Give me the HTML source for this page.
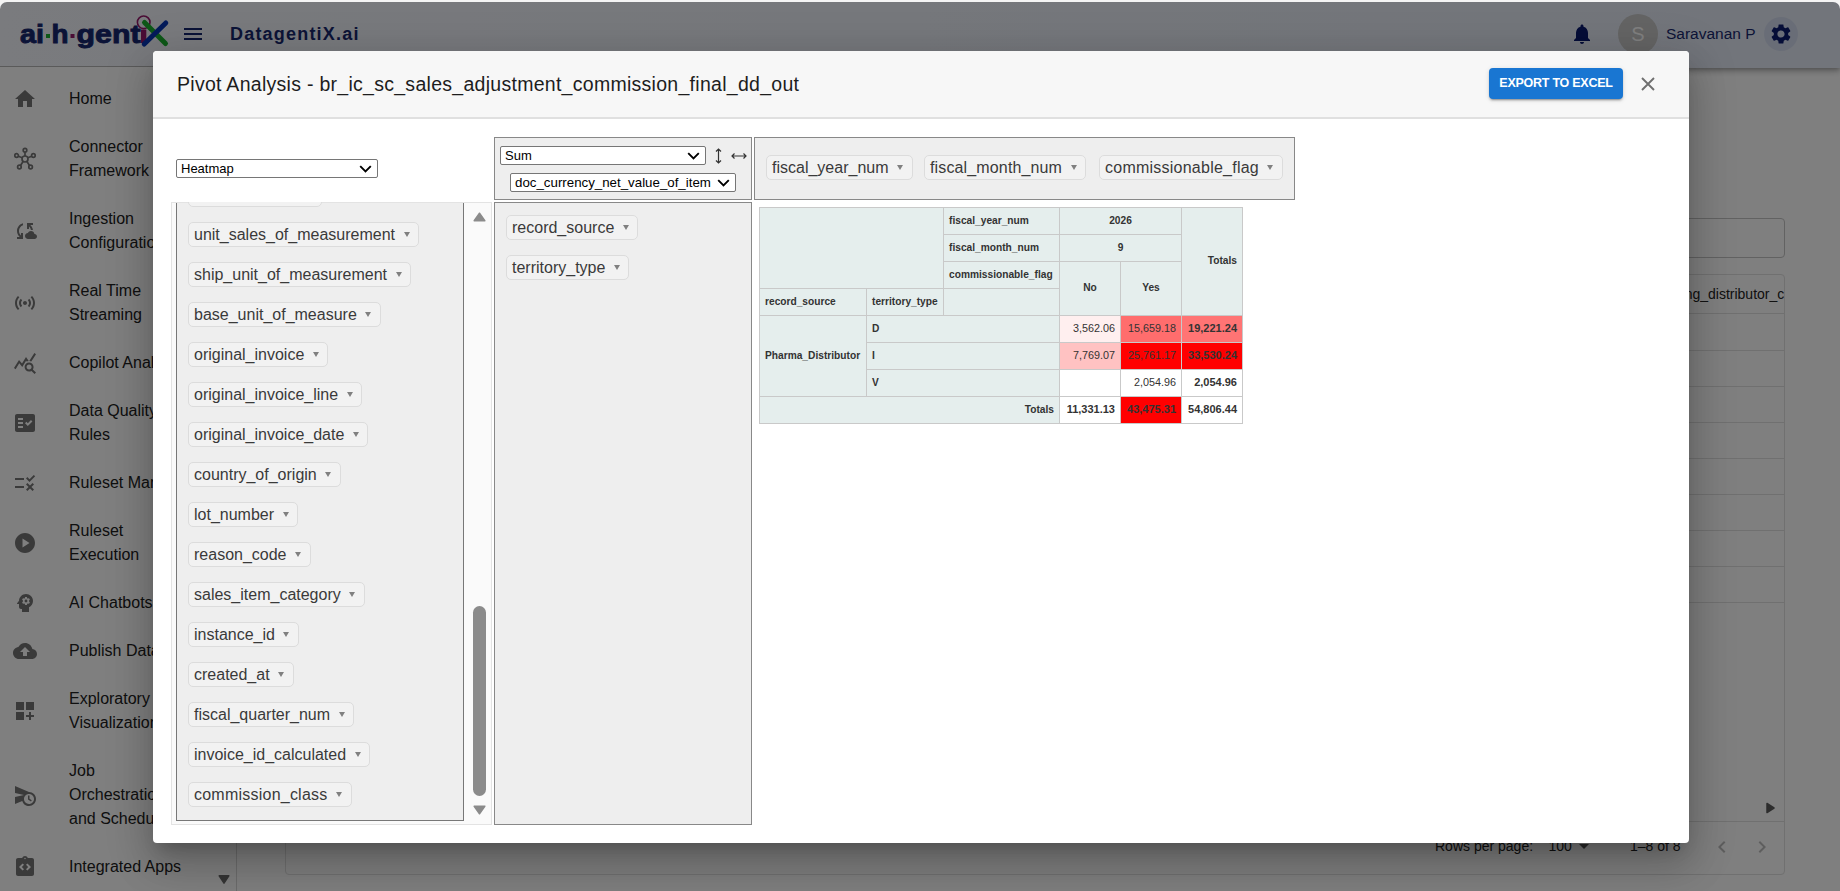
<!DOCTYPE html>
<html><head><meta charset="utf-8">
<style>
*{box-sizing:border-box;margin:0;padding:0}
html,body{width:1840px;height:891px;overflow:hidden;background:#f4f4f4;font-family:"Liberation Sans",sans-serif}
.abs{position:absolute}
#app{position:absolute;z-index:0;left:0;top:2px;width:1840px;height:889px;border-radius:7px 7px 0 0;overflow:hidden;background:#fff}
#hdr{position:absolute;left:0;top:-2px;width:1840px;height:68px;z-index:2;box-shadow:0 2px 4px -1px rgba(0,0,0,.2),0 4px 5px 0 rgba(0,0,0,.14),0 1px 10px 0 rgba(0,0,0,.12);background:linear-gradient(90deg,#f4f6fc 0%,#ecf0f8 50%,#e4eaf6 100%);}
#side{position:absolute;left:0;top:64px;width:237px;height:825px;z-index:3;border-top:1px solid #b4b4b4;overflow:hidden;background:#fff;border-right:1px solid #d9d9d9}
.mi{position:absolute;left:0;width:236px}
.mi .ic{position:absolute;left:13px;width:24px;height:24px}
.mi .tx{position:absolute;left:69px;font-size:16px;line-height:24px;color:#212121;white-space:nowrap}
#overlay{position:absolute;left:0;top:2px;width:1840px;height:889px;border-radius:7px 7px 0 0;background:rgba(0,0,0,0.5)}
#modal{position:absolute;left:153px;top:51px;width:1536px;height:792px;background:#fff;border-radius:4px;overflow:hidden;
 box-shadow:0px 11px 15px -7px rgba(0,0,0,0.2),0px 24px 38px 3px rgba(0,0,0,0.14),0px 9px 46px 8px rgba(0,0,0,0.12)}
.sel{position:absolute;background:#fff;border:1px solid #767676;border-radius:2px}
.chip{position:absolute;height:25px;line-height:22px;padding:1px 8.5px 0 5px;font-size:16px;color:#3a3a3a;background:#f2f2f2;border:1px solid #dcdcdc;border-radius:5px;white-space:nowrap}
.chip i{display:inline-block;width:0;height:0;border-left:3px solid transparent;border-right:3px solid transparent;border-top:5.5px solid #808080;margin-left:8.5px;vertical-align:3px}
.cell{position:absolute;border:1px solid #c9c9c9;padding:0 5px;color:#333;white-space:nowrap;overflow:hidden}
#main{position:absolute;left:0;top:-2px;width:1840px;height:891px}
</style></head><body>
<div id="app">
  <div id="hdr">
    <svg class="abs" style="left:0;top:0" width="180" height="64" viewBox="0 0 180 64">
      <text x="20" y="43" font-family="Liberation Sans" font-weight="bold" font-size="26" fill="#16266e" stroke="#16266e" stroke-width="0.9" textLength="24" lengthAdjust="spacingAndGlyphs">ai</text>
      <rect x="46" y="34" width="4" height="4" fill="#1cb030"/>
      <text x="51.5" y="43" font-family="Liberation Sans" font-weight="bold" font-size="26" fill="#16266e" stroke="#16266e" stroke-width="0.9" textLength="17" lengthAdjust="spacingAndGlyphs">h</text>
      <rect x="70.5" y="34" width="4" height="4" fill="#941a6a"/>
      <text x="76.5" y="43" font-family="Liberation Sans" font-weight="bold" font-size="26" fill="#16266e" stroke="#16266e" stroke-width="0.9" textLength="64" lengthAdjust="spacingAndGlyphs">gent</text>
      <rect x="141" y="29.5" width="5.3" height="13.5" fill="#941a6a"/>
      <circle cx="143.7" cy="22.3" r="6.3" fill="none" stroke="#941a6a" stroke-width="1.6"/>
      <line x1="144.5" y1="22.5" x2="165.5" y2="43.5" stroke="#1cb030" stroke-width="5" stroke-linecap="round"/>
      <line x1="165.8" y1="23" x2="144.2" y2="44" stroke="#0836b4" stroke-width="5" stroke-linecap="round"/>
    </svg>
    <svg class="abs" style="left:181px;top:22px" width="24" height="24" viewBox="0 0 24 24"><path d="M3 18h18v-2H3v2zm0-5h18v-2H3v2zm0-7v2h18V6H3z" fill="#16266e"/></svg>
    <div class="abs" style="left:230px;top:22.3px;font-size:18px;line-height:24px;font-weight:bold;letter-spacing:1.2px;color:#18286e;white-space:nowrap">DatagentiX.ai</div>
    <svg class="abs" style="left:1569.5px;top:22px" width="24" height="24" viewBox="0 0 24 24"><path d="M12 22c1.1 0 2-.9 2-2h-4c0 1.1.89 2 2 2zm6-6v-5c0-3.07-1.64-5.64-4.5-6.32V4c0-.83-.67-1.5-1.5-1.5s-1.5.67-1.5 1.5v.68C7.63 5.36 6 7.92 6 11v5l-2 2v1h16v-1l-2-2z" fill="#0a1a6e"/></svg>
    <div class="abs" style="left:1618px;top:14px;width:40px;height:40px;border-radius:50%;background:#c8c8c8;color:#fff;font-size:20px;line-height:40px;text-align:center">S</div>
    <div class="abs" style="left:1666px;top:21.6px;font-size:15.5px;line-height:24px;color:#18286e;white-space:nowrap">Saravanan P</div>
    <div class="abs" style="left:1764px;top:17px;width:34px;height:34px;border-radius:50%;background:#d3dbef"></div>
    <svg class="abs" style="left:1769px;top:22px" width="24" height="24" viewBox="0 0 24 24"><path d="M19.14 12.94c.04-.3.06-.61.06-.94 0-.32-.02-.64-.07-.94l2.03-1.58c.18-.14.23-.41.12-.61l-1.92-3.32c-.12-.22-.37-.29-.59-.22l-2.39.96c-.5-.38-1.03-.7-1.62-.94l-.36-2.54c-.04-.24-.24-.41-.48-.41h-3.84c-.24 0-.43.17-.47.41l-.36 2.54c-.59.24-1.13.57-1.62.94l-2.39-.96c-.22-.08-.47 0-.59.22L2.74 8.87c-.12.21-.08.47.12.61l2.03 1.58c-.05.3-.09.63-.09.94s.02.64.07.94l-2.03 1.58c-.18.14-.23.41-.12.61l1.92 3.32c.12.22.37.29.59.22l2.39-.96c.5.38 1.03.7 1.62.94l.36 2.54c.05.24.24.41.48.41h3.84c.24 0 .44-.17.47-.41l.36-2.54c.59-.24 1.13-.56 1.62-.94l2.39.96c.22.08.47 0 .59-.22l1.92-3.32c.12-.22.07-.47-.12-.61l-2.01-1.58zM12 15.6c-1.98 0-3.6-1.62-3.6-3.6s1.62-3.6 3.6-3.6 3.6 1.62 3.6 3.6-1.62 3.6-3.6 3.6z" fill="#0a1a6e"/></svg>
  </div>
  <div id="side">
<svg class="abs" style="left:13px;top:20px" width="24" height="24" viewBox="0 0 24 24" fill="#757575"><path d="M10 20v-6h4v6h5v-8h3L12 3 2 12h3v8z"/></svg>
<div class="abs" style="left:69px;top:20px;font-size:16px;line-height:24px;color:#212121;white-space:nowrap">Home</div>
<svg class="abs" style="left:13px;top:80px" width="24" height="24" viewBox="0 0 24 24" fill="#757575"><g fill="none" stroke="#757575" stroke-width="1.7"><circle cx="12" cy="12" r="3"/><circle cx="12" cy="3.2" r="1.8"/><circle cx="3.6" cy="8.5" r="1.8"/><circle cx="20.4" cy="8.5" r="1.8"/><circle cx="6.4" cy="20" r="1.8"/><circle cx="17.6" cy="20" r="1.8"/><path d="M12 5v4M5.3 9.2l4 1.5M18.7 9.2l-4 1.5M7.5 18.5l2.6-4M16.5 18.5l-2.6-4"/></g></svg>
<div class="abs" style="left:69px;top:68px;font-size:16px;line-height:24px;color:#212121;white-space:nowrap">Connector<br>Framework</div>
<svg class="abs" style="left:13px;top:152px" width="24" height="24" viewBox="0 0 24 24" fill="#757575"><path d="M21.5 14.98c-.02 0-.03 0-.05.01C21.2 13.3 19.760 12 18 12c-1.4 0-2.6.83-3.16 2.02C13.26 14.1 12 15.4 12 17c0 1.66 1.34 3 3 3l6.5-.02c1.38 0 2.5-1.12 2.5-2.5s-1.12-2.5-2.5-2.5zM10 4.26v2.09C7.67 7.18 6 9.39 6 12c0 1.770.78 3.34 2 4.44V14h2v6H4v-2h2.73C5.06 16.54 4 14.4 4 12c0-3.73 2.55-6.85 6-7.74zM20 6h-2.73c1.43 1.26 2.41 3.01 2.66 5h-2.02c-.23-1.36-.93-2.55-1.91-3.44V10h-2V4h6v2z"/></svg>
<div class="abs" style="left:69px;top:140px;font-size:16px;line-height:24px;color:#212121;white-space:nowrap">Ingestion<br>Configuration</div>
<svg class="abs" style="left:13px;top:224px" width="24" height="24" viewBox="0 0 24 24" fill="#757575"><path d="M7.76 16.24C6.67 15.16 6 13.66 6 12s.67-3.16 1.76-4.24l1.42 1.42C8.45 9.9 8 10.9 8 12c0 1.1.45 2.1 1.17 2.83l-1.41 1.41zm8.48 0C17.33 15.16 18 13.66 18 12s-.67-3.16-1.76-4.24l-1.42 1.42C15.55 9.9 16 10.9 16 12c0 1.1-.45 2.1-1.17 2.830l1.41 1.41zM12 10c-1.1 0-2 .9-2 2s.9 2 2 2 2-.9 2-2-.9-2-2-2zm8 2c0 2.21-.9 4.21-2.35 5.65l1.42 1.42C20.88 17.26 22 14.76 22 12s-1.12-5.26-2.93-7.07l-1.420 1.42C19.1 7.79 20 9.79 20 12zM6.35 6.35 4.93 4.93C3.12 6.74 2 9.24 2 12s1.12 5.26 2.93 7.07l1.42-1.42C4.9 16.21 4 14.21 4 12s.9-4.21 2.35-5.65z"/></svg>
<div class="abs" style="left:69px;top:212px;font-size:16px;line-height:24px;color:#212121;white-space:nowrap">Real Time<br>Streaming</div>
<svg class="abs" style="left:13px;top:284px" width="24" height="24" viewBox="0 0 24 24" fill="#757575"><path d="M19.88 18.47c.44-.7.7-1.51.7-2.39 0-2.49-2.01-4.5-4.5-4.5s-4.5 2.01-4.5 4.5 2.01 4.5 4.49 4.5c.88 0 1.7-.26 2.39-.7L21.58 23 23 21.58l-3.12-3.11zm-3.8.11c-1.38 0-2.5-1.12-2.5-2.5s1.12-2.5 2.5-2.5 2.5 1.12 2.5 2.5-1.12 2.5-2.5 2.5zm-.36-8.5c-.74.02-1.45.18-2.1.45l-.55-.83-3.8 6.18-3.01-3.52-3.63 5.81L1 17l5-8 3 3.5L13 6l2.72 4.08zm2.59.5c-.64-.28-1.33-.45-2.05-.49L21.38 2 23 3.18l-4.690 7.4z"/></svg>
<div class="abs" style="left:69px;top:284px;font-size:16px;line-height:24px;color:#212121;white-space:nowrap">Copilot Analytics</div>
<svg class="abs" style="left:13px;top:344px" width="24" height="24" viewBox="0 0 24 24" fill="#757575"><path d="M20 3H4c-1.1 0-2 .9-2 2v14c0 1.1.9 2 2 2h16c1.1 0 2-.9 2-2V5c0-1.1-.9-2-2-2zM10 17H5v-2h5v2zm0-4H5v-2h5v2zm0-4H5V7h5v2zm4.82 6L12 12.16l1.41-1.41 1.41 1.42L17.99 9l1.42 1.42L14.82 15z"/></svg>
<div class="abs" style="left:69px;top:332px;font-size:16px;line-height:24px;color:#212121;white-space:nowrap">Data Quality<br>Rules</div>
<svg class="abs" style="left:13px;top:404px" width="24" height="24" viewBox="0 0 24 24" fill="#757575"><path d="M16.54 11 13 7.46l1.41-1.41 2.12 2.12 4.24-4.24 1.41 1.41L16.54 11zM11 7H2v2h9V7zm10 6.41L19.59 12 17 14.59 14.41 12 13 13.410 15.59 16 13 18.59 14.41 20 17 17.41 19.59 20 21 18.59 18.41 16 21 13.41zM11 15H2v2h9v-2z"/></svg>
<div class="abs" style="left:69px;top:404px;font-size:16px;line-height:24px;color:#212121;white-space:nowrap">Ruleset Management</div>
<svg class="abs" style="left:13px;top:464px" width="24" height="24" viewBox="0 0 24 24" fill="#757575"><path d="M12 2C6.48 2 2 6.48 2 12s4.48 10 10 10 10-4.48 10-10S17.52 2 12 2zM9.5 16.5v-9l7 4.5-7 4.5z"/></svg>
<div class="abs" style="left:69px;top:452px;font-size:16px;line-height:24px;color:#212121;white-space:nowrap">Ruleset<br>Execution</div>
<svg class="abs" style="left:13px;top:524px" width="24" height="24" viewBox="0 0 24 24" fill="#757575"><path d="M13 8.57c-.79 0-1.43.64-1.43 1.43s.64 1.43 1.43 1.43 1.43-.64 1.43-1.43-.64-1.43-1.43-1.43z"/><path d="M13 3C9.25 3 6.2 5.94 6.02 9.64L4.1 12.2c-.25.33-.01.8.4.8H6v3c0 1.1.9 2 2 2h1v3h7v-4.68c2.36-1.12 4-3.53 4-6.32 0-3.87-3.13-7-7-7zm3 7c0 .13-.01.26-.02.39l.83.66c.08.06.1.16.05.25l-.8 1.39c-.05.09-.16.12-.24.09l-.99-.4c-.21.16-.43.29-.67.39L14 13.83c-.01.1-.1.17-.2.17h-1.6c-.1 0-.18-.07-.2-.17l-.15-1.06c-.25-.1-.47-.23-.68-.39l-.99.4c-.09.03-.2 0-.25-.09l-.8-1.39c-.05-.08-.03-.19.05-.25l.84-.66c-.01-.13-.02-.26-.02-.39s.02-.27.04-.39l-.85-.66c-.08-.06-.1-.16-.05-.26l.8-1.38c.05-.09.15-.12.24-.09l1 .4c.2-.15.43-.29.67-.39L12 6.17c.02-.1.1-.17.2-.17h1.6c.1 0 .18.07.19.17l.15 1.06c.24.1.46.23.67.39l1-.4c.09-.03.2 0 .24.09l.8 1.38c.05.09.03.2-.05.26l-.85.66c.03.12.04.25.04.39z"/></svg>
<div class="abs" style="left:69px;top:524px;font-size:16px;line-height:24px;color:#212121;white-space:nowrap">AI Chatbots</div>
<svg class="abs" style="left:13px;top:572px" width="24" height="24" viewBox="0 0 24 24" fill="#757575"><path d="M19.35 10.04C18.67 6.59 15.64 4 12 4 9.11 4 6.6 5.64 5.35 8.04 2.34 8.36 0 10.91 0 14c0 3.31 2.69 6 6 6h13c2.76 0 5-2.24 5-5 0-2.64-2.05-4.78-4.65-4.96zM14 13v4h-4v-4H7l5-5 5 5h-3z"/></svg>
<div class="abs" style="left:69px;top:572px;font-size:16px;line-height:24px;color:#212121;white-space:nowrap">Publish Data</div>
<svg class="abs" style="left:13px;top:632px" width="24" height="24" viewBox="0 0 24 24" fill="#757575"><path d="M3 3h8v8H3zm10 0h8v8h-8zM3 13h8v8H3zm15 0h-2v3h-3v2h3v3h2v-3h3v-2h-3z"/></svg>
<div class="abs" style="left:69px;top:620px;font-size:16px;line-height:24px;color:#212121;white-space:nowrap">Exploratory<br>Visualization</div>
<svg class="abs" style="left:13px;top:716px" width="24" height="24" viewBox="0 0 24 24" fill="#757575"><path d="M16.5 12.5H15v4l3 2 .75-1.23-2.25-1.52V12.5zM16 9 2 3v7l9 2-9 2v7l7.27-3.11C10.09 20.830 12.79 23 16 23c3.86 0 7-3.14 7-7s-3.14-7-7-7zm0 12c-2.75 0-4.98-2.22-5-4.97v-.07c.02-2.74 2.25-4.97 5-4.97 2.76 0 5 2.24 5 5S18.76 21 16 21z"/></svg>
<div class="abs" style="left:69px;top:692px;font-size:16px;line-height:24px;color:#212121;white-space:nowrap">Job<br>Orchestration<br>and Scheduling</div>
<svg class="abs" style="left:13px;top:788px" width="24" height="24" viewBox="0 0 24 24" fill="#757575"><path d="M19 3h-4.18C14.4 1.84 13.3 1 12 1s-2.4.84-2.82 2H5c-1.1 0-2 .9-2 2v14c0 1.1.9 2 2 2h14c1.1 0 2-.9 2-2V5c0-1.1-.9-2-2-2zm-7-.25c.41 0 .75.34.75.75s-.34.75-.75.75-.75-.34-.75-.75.34-.75.75-.75zM11 14.17l-1.41 1.42L6 12l3.59-3.59L11 9.830 8.83 12 11 14.17zm3.41 1.42L13 14.170 15.17 12 13 9.83l1.41-1.42L18 12l-3.59 3.59z"/></svg>
<div class="abs" style="left:69px;top:788px;font-size:16px;line-height:24px;color:#212121;white-space:nowrap">Integrated Apps</div>
<svg class="abs" style="left:217px;top:807px" width="14" height="11" viewBox="0 0 14 11"><path d="M2.2 1.8h9.6L7 9.2z" fill="#6a6a6a" stroke="#6a6a6a" stroke-width="1.5" stroke-linejoin="round"/></svg>
  </div>
  <div id="main">
    <div class="abs" style="left:1400px;top:218px;width:385px;height:40px;border:1px solid #c4c4c4;border-radius:4px"></div>
    <div class="abs" style="left:285px;top:274px;width:1500px;height:601px;border:1px solid #e0e0e0;border-radius:4px"></div>
    <div class="abs" style="left:286px;top:275px;width:1498px;height:598px;overflow:hidden">
      <div class="abs" style="left:1325.5px;top:7px;font-size:14px;line-height:24px;color:#222;white-space:nowrap;">manufacturing_distributor_code</div>
    </div>
<div class="abs" style="left:286px;top:313px;width:1498px;height:1px;background:#e0e0e0"></div>
<div class="abs" style="left:286px;top:350px;width:1498px;height:1px;background:#e0e0e0"></div>
<div class="abs" style="left:286px;top:386px;width:1498px;height:1px;background:#e0e0e0"></div>
<div class="abs" style="left:286px;top:422px;width:1498px;height:1px;background:#e0e0e0"></div>
<div class="abs" style="left:286px;top:458px;width:1498px;height:1px;background:#e0e0e0"></div>
<div class="abs" style="left:286px;top:494px;width:1498px;height:1px;background:#e0e0e0"></div>
<div class="abs" style="left:286px;top:530px;width:1498px;height:1px;background:#e0e0e0"></div>
<div class="abs" style="left:286px;top:566px;width:1498px;height:1px;background:#e0e0e0"></div>
<div class="abs" style="left:286px;top:602px;width:1498px;height:1px;background:#e0e0e0"></div>
    <div class="abs" style="left:286px;top:821px;width:1498px;height:1px;background:#e0e0e0"></div>
    <svg class="abs" style="left:1764px;top:802px" width="12" height="12" viewBox="0 0 12 12"><path d="M3 1.5L10 6L3 10.5Z" fill="#5a5a5a" stroke="#5a5a5a" stroke-width="1.5" stroke-linejoin="round"/></svg>
    <div class="abs" style="left:1435px;top:833.8px;font-size:14px;line-height:24px;color:#222;white-space:nowrap">Rows per page:</div>
    <div class="abs" style="left:1548.5px;top:833.8px;font-size:14px;line-height:24px;color:#222;white-space:nowrap">100</div>
    <svg class="abs" style="left:1572px;top:834px" width="24" height="24" viewBox="0 0 24 24"><path d="M7 10l5 5 5-5z" fill="#555"/></svg>
    <div class="abs" style="left:1630px;top:833.8px;font-size:14px;line-height:24px;color:#222;white-space:nowrap">1–8 of 8</div>
    <svg class="abs" style="left:1710px;top:835px" width="24" height="24" viewBox="0 0 24 24"><path d="M15.41 7.41 14 6l-6 6 6 6 1.41-1.41L10.83 12z" fill="#bdbdbd"/></svg>
    <svg class="abs" style="left:1750px;top:835px" width="24" height="24" viewBox="0 0 24 24"><path d="M10 6 8.59 7.41 13.17 12l-4.58 4.59L10 18l6-6z" fill="#bdbdbd"/></svg>
  </div>
</div>

<div id="overlay"></div>
<div id="modal">
<div class="abs" style="left:0;top:0;width:1536px;height:68px;background:#f7f7f7;border-bottom:2px solid #e0e0e0"></div>
<div class="abs" style="left:24px;top:21.0px;font-size:19.5px;line-height:24px;letter-spacing:0.28px;color:#1d1d1d;white-space:nowrap">Pivot Analysis - br_ic_sc_sales_adjustment_commission_final_dd_out</div>
<div class="abs" style="left:1336px;top:17px;width:134px;height:31px;background:#1976d2;border-radius:4px;box-shadow:0 3px 1px -2px rgba(0,0,0,.2),0 2px 2px 0 rgba(0,0,0,.14),0 1px 5px 0 rgba(0,0,0,.12)"></div>
<div class="abs" style="left:1336px;top:19.9px;width:134px;text-align:center;font-size:12.5px;line-height:24px;font-weight:bold;letter-spacing:-0.25px;color:#fff;white-space:nowrap">EXPORT TO EXCEL</div>
<svg class="abs" style="left:1488px;top:26px" width="14" height="14" viewBox="0 0 14 14"><path d="M1 1L13 13M13 1L1 13" stroke="#6f6f6f" stroke-width="1.9"/></svg>
<div class="abs sel" style="left:23px;top:108px;width:202px;height:19px"><span style="position:absolute;left:4px;top:0;line-height:17px;font-size:13px;color:#000;white-space:nowrap">Heatmap</span><svg style="position:absolute;right:5px;top:4.5px" width="13" height="8" viewBox="0 0 13 8"><path d="M1.2 1.2L6.5 6.5L11.8 1.2" fill="none" stroke="#000" stroke-width="1.9"/></svg></div>
<div class="abs" style="left:341px;top:86px;width:258px;height:63px;background:#eee;border:1px solid #888"></div>
<div class="abs sel" style="left:347px;top:95px;width:206px;height:19px"><span style="position:absolute;left:4px;top:0;line-height:17px;font-size:13px;color:#000;white-space:nowrap">Sum</span><svg style="position:absolute;right:5px;top:4.5px" width="13" height="8" viewBox="0 0 13 8"><path d="M1.2 1.2L6.5 6.5L11.8 1.2" fill="none" stroke="#000" stroke-width="1.9"/></svg></div>
<svg class="abs" style="left:559px;top:95px" width="13" height="20" viewBox="0 0 13 20"><path d="M6.5 3V17M4 5.5L6.5 3L9 5.5M4 14.5L6.5 17L9 14.5" fill="none" stroke="#333" stroke-width="1.2"/></svg>
<svg class="abs" style="left:576px;top:95px" width="20" height="20" viewBox="0 0 20 20"><path d="M3 10H17M5.5 7.5L3 10L5.5 12.5M14.5 7.5L17 10L14.5 12.5" fill="none" stroke="#333" stroke-width="1.2"/></svg>
<div class="abs sel" style="left:357px;top:122px;width:226px;height:19px"><span style="position:absolute;left:4px;top:0;line-height:17px;font-size:13.3px;color:#000;white-space:nowrap">doc_currency_net_value_of_item</span><svg style="position:absolute;right:5px;top:4.5px" width="13" height="8" viewBox="0 0 13 8"><path d="M1.2 1.2L6.5 6.5L11.8 1.2" fill="none" stroke="#000" stroke-width="1.9"/></svg></div>
<div class="abs" style="left:601px;top:86px;width:541px;height:63px;background:#eee;border:1px solid #888"></div>
<div class="abs chip" style="left:613px;top:104px;">fiscal_year_num<i></i></div>
<div class="abs chip" style="left:771px;top:104px;letter-spacing:0.14px;">fiscal_month_num<i></i></div>
<div class="abs chip" style="left:946px;top:104px;letter-spacing:0.24px;">commissionable_flag<i></i></div>
<div class="abs" style="left:18px;top:151px;width:321px;height:623px;background:#fafafa;border:1px solid #e3e3e3;overflow:hidden">
<div style="position:absolute;left:4px;top:-21px;width:288px;height:639px;background:#eee;border:1px solid #777;border-top:none"></div>
</div>
<div class="abs" style="left:24px;top:151px;width:286px;height:618px;overflow:hidden">
<div class="chip" style="position:absolute;left:11px;top:-20px;width:134px">&nbsp;</div>
<div class="chip" style="position:absolute;left:11px;top:20px;">unit_sales_of_measurement<i></i></div>
<div class="chip" style="position:absolute;left:11px;top:60px;">ship_unit_of_measurement<i></i></div>
<div class="chip" style="position:absolute;left:11px;top:100px;">base_unit_of_measure<i></i></div>
<div class="chip" style="position:absolute;left:11px;top:140px;">original_invoice<i></i></div>
<div class="chip" style="position:absolute;left:11px;top:180px;">original_invoice_line<i></i></div>
<div class="chip" style="position:absolute;left:11px;top:220px;">original_invoice_date<i></i></div>
<div class="chip" style="position:absolute;left:11px;top:260px;">country_of_origin<i></i></div>
<div class="chip" style="position:absolute;left:11px;top:300px;">lot_number<i></i></div>
<div class="chip" style="position:absolute;left:11px;top:340px;">reason_code<i></i></div>
<div class="chip" style="position:absolute;left:11px;top:380px;">sales_item_category<i></i></div>
<div class="chip" style="position:absolute;left:11px;top:420px;">instance_id<i></i></div>
<div class="chip" style="position:absolute;left:11px;top:460px;">created_at<i></i></div>
<div class="chip" style="position:absolute;left:11px;top:500px;">fiscal_quarter_num<i></i></div>
<div class="chip" style="position:absolute;left:11px;top:540px;">invoice_id_calculated<i></i></div>
<div class="chip" style="position:absolute;left:11px;top:580px;letter-spacing:0.23px;">commission_class<i></i></div>
</div>
<div class="abs" style="left:320px;top:555px;width:13px;height:190px;background:#8b8b8b;border-radius:6.5px"></div>
<svg class="abs" style="left:320px;top:161px" width="13" height="10" viewBox="0 0 13 10"><path d="M6.5 1.2L11.8 8.8H1.2Z" fill="#8b8b8b" stroke="#8b8b8b" stroke-width="1.5" stroke-linejoin="round"/></svg>
<svg class="abs" style="left:320px;top:754px" width="13" height="10" viewBox="0 0 13 10"><path d="M6.5 8.8L11.8 1.2H1.2Z" fill="#8b8b8b" stroke="#8b8b8b" stroke-width="1.5" stroke-linejoin="round"/></svg>
<div class="abs" style="left:341px;top:151px;width:258px;height:623px;background:#eee;border:1px solid #888"></div>
<div class="abs chip" style="left:353px;top:164px;">record_source<i></i></div>
<div class="abs chip" style="left:353px;top:204px;">territory_type<i></i></div>
<div class="abs cell" style="left:606px;top:156px;width:185px;height:82px;background:#e5eeed;text-align:left;font-size:10.2px;font-weight:bold;line-height:80px"></div>
<div class="abs cell" style="left:790px;top:156px;width:117px;height:28px;background:#e5eeed;text-align:left;font-size:10.2px;font-weight:bold;line-height:26px">fiscal_year_num</div>
<div class="abs cell" style="left:906px;top:156px;width:123px;height:28px;background:#e5eeed;text-align:center;font-size:10.2px;font-weight:bold;line-height:26px">2026</div>
<div class="abs cell" style="left:1028px;top:156px;width:62px;height:109px;background:#e5eeed;text-align:right;font-size:10.2px;font-weight:bold;line-height:105px">Totals</div>
<div class="abs cell" style="left:790px;top:183px;width:117px;height:28px;background:#e5eeed;text-align:left;font-size:10.2px;font-weight:bold;line-height:26px">fiscal_month_num</div>
<div class="abs cell" style="left:906px;top:183px;width:123px;height:28px;background:#e5eeed;text-align:center;font-size:10.2px;font-weight:bold;line-height:26px">9</div>
<div class="abs cell" style="left:790px;top:210px;width:117px;height:28px;background:#e5eeed;text-align:left;font-size:10.2px;font-weight:bold;line-height:26px">commissionable_flag</div>
<div class="abs cell" style="left:906px;top:210px;width:62px;height:55px;background:#e5eeed;text-align:center;font-size:10.2px;font-weight:bold;line-height:51px">No</div>
<div class="abs cell" style="left:967px;top:210px;width:62px;height:55px;background:#e5eeed;text-align:center;font-size:10.2px;font-weight:bold;line-height:51px">Yes</div>
<div class="abs cell" style="left:606px;top:237px;width:108px;height:28px;background:#e5eeed;text-align:left;font-size:10.2px;font-weight:bold;line-height:26px">record_source</div>
<div class="abs cell" style="left:713px;top:237px;width:78px;height:28px;background:#e5eeed;text-align:left;font-size:10.2px;font-weight:bold;line-height:26px">territory_type</div>
<div class="abs cell" style="left:790px;top:237px;width:117px;height:28px;background:#e5eeed;text-align:left;font-size:10.2px;font-weight:bold;line-height:26px"></div>
<div class="abs cell" style="left:606px;top:264px;width:108px;height:82px;background:#e5eeed;text-align:left;font-size:10.2px;font-weight:bold;line-height:80px">Pharma_Distributor</div>
<div class="abs cell" style="left:713px;top:264px;width:194px;height:28px;background:#e5eeed;text-align:left;font-size:10.2px;font-weight:bold;line-height:26px">D</div>
<div class="abs cell" style="left:713px;top:291px;width:194px;height:28px;background:#e5eeed;text-align:left;font-size:10.2px;font-weight:bold;line-height:26px">I</div>
<div class="abs cell" style="left:713px;top:318px;width:194px;height:28px;background:#e5eeed;text-align:left;font-size:10.2px;font-weight:bold;line-height:26px">V</div>
<div class="abs cell" style="left:606px;top:345px;width:301px;height:28px;background:#e5eeed;text-align:right;font-size:10.2px;font-weight:bold;line-height:26px">Totals</div>
<div class="abs cell" style="left:906px;top:264px;width:62px;height:28px;background:rgb(255,239,239);text-align:right;font-size:10.8px;font-weight:normal;line-height:24px">3,562.06</div>
<div class="abs cell" style="left:967px;top:264px;width:62px;height:28px;background:rgb(255,109,109);text-align:right;font-size:10.8px;font-weight:normal;line-height:24px">15,659.18</div>
<div class="abs cell" style="left:1028px;top:264px;width:62px;height:28px;background:rgb(255,116,116);text-align:right;font-size:11px;font-weight:bold;line-height:24px">19,221.24</div>
<div class="abs cell" style="left:906px;top:291px;width:62px;height:28px;background:rgb(255,194,194);text-align:right;font-size:10.8px;font-weight:normal;line-height:24px">7,769.07</div>
<div class="abs cell" style="left:967px;top:291px;width:62px;height:28px;background:rgb(255,0,0);text-align:right;font-size:10.8px;font-weight:normal;line-height:24px">25,761.17</div>
<div class="abs cell" style="left:1028px;top:291px;width:62px;height:28px;background:rgb(255,0,0);text-align:right;font-size:11px;font-weight:bold;line-height:24px">33,530.24</div>
<div class="abs cell" style="left:906px;top:318px;width:62px;height:28px;background:#fff;text-align:right;font-size:10.8px;font-weight:normal;line-height:24px"></div>
<div class="abs cell" style="left:967px;top:318px;width:62px;height:28px;background:#fff;text-align:right;font-size:10.8px;font-weight:normal;line-height:24px">2,054.96</div>
<div class="abs cell" style="left:1028px;top:318px;width:62px;height:28px;background:#fff;text-align:right;font-size:11px;font-weight:bold;line-height:24px">2,054.96</div>
<div class="abs cell" style="left:906px;top:345px;width:62px;height:28px;background:#fff;text-align:right;font-size:11px;font-weight:bold;line-height:24px">11,331.13</div>
<div class="abs cell" style="left:967px;top:345px;width:62px;height:28px;background:rgb(255,0,0);text-align:right;font-size:11px;font-weight:bold;line-height:24px">43,475.31</div>
<div class="abs cell" style="left:1028px;top:345px;width:62px;height:28px;background:#fff;text-align:right;font-size:11px;font-weight:bold;line-height:24px">54,806.44</div>
</div>
</body></html>
